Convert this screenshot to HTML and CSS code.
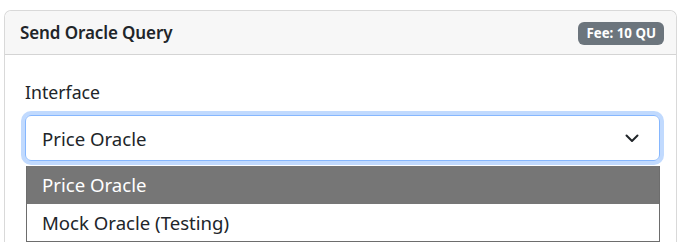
FILE: index.html
```html
<!DOCTYPE html>
<html lang="en">
<head>
<meta charset="utf-8">
<title>Send Oracle Query</title>
<link rel="stylesheet" href="styles.css">
</head>
<body>
<div class="card">
  <div class="card-header">
    <span class="title">Send Oracle Query</span>
    <span class="badge">Fee: 10 QU</span>
  </div>
  <div class="card-body">
    <label class="label">Interface</label>
    <div class="select-wrap">
      <div class="select">
        <span class="value">Price Oracle</span>
        <svg class="chev" width="14" height="9" viewBox="0 0 14 9"><path d="M1.5 1.5 L7 7 L12.5 1.5" fill="none" stroke="#212529" stroke-width="2" stroke-linecap="round" stroke-linejoin="round"/></svg>
      </div>
      <div class="popup">
        <div class="opt selected">Price Oracle</div>
        <div class="opt">Mock Oracle (Testing)</div>
      </div>
    </div>
  </div>
</div>
</body>
</html>
```
FILE: styles.css
```css
html, body {
  margin: 0;
  padding: 0;
  background: #fff;
  overflow: hidden;
}
body {
  font-family: "Noto Sans", "Open Sans", sans-serif;
  color: #212529;
  width: 679px;
  height: 242px;
}
.card {
  margin: 10px 0 0 4px;
  width: 673px;
  height: 232px;
  border: 1px solid #d9d9d9;
  border-bottom: none;
  border-radius: 7px 7px 0 0;
  box-sizing: border-box;
}
.card-header {
  height: 44px;
  box-sizing: border-box;
  background: #f7f7f7;
  border-bottom: 1px solid #d4d4d4;
  border-radius: 7px 7px 0 0;
  display: flex;
  align-items: center;
  justify-content: space-between;
  padding: 0 12px 0 15px;
}
.title {
  font-weight: 600;
  font-size: 17px;
  letter-spacing: -0.1px;
}
.badge {
  background: #6c757d;
  color: #fff;
  font-weight: 700;
  font-size: 13.3px;
  height: 23px;
  line-height: 23px;
  padding: 0 8px;
  border-radius: 6px;
  margin-top: 1px;
}
.card-body {
  padding: 24px 16px 0 20px;
}
.label {
  display: block;
  font-size: 17.7px;
  line-height: 26px;
  margin-bottom: 10px;
}
.select-wrap {
  position: relative;
}
.select {
  height: 46px;
  box-sizing: border-box;
  border: 1px solid #86b7fe;
  border-radius: 6px;
  box-shadow: 0 0 0 4px #c1dafe;
  display: flex;
  align-items: center;
  justify-content: space-between;
  padding: 0 20px 0 16px;
  font-size: 18.6px;
}
.chev {
  margin-top: 1px;
}
.popup {
  position: absolute;
  left: 1px;
  top: 51px;
  width: 634px;
  box-sizing: border-box;
  border: 1px solid #6d6d6d;
  border-top: none;
  background: #fff;
  font-size: 18.6px;
}
.opt {
  height: 37.5px;
  line-height: 37px;
  padding-left: 15px;
}
.opt.selected {
  background: #767676;
  color: #fff;
}
```
